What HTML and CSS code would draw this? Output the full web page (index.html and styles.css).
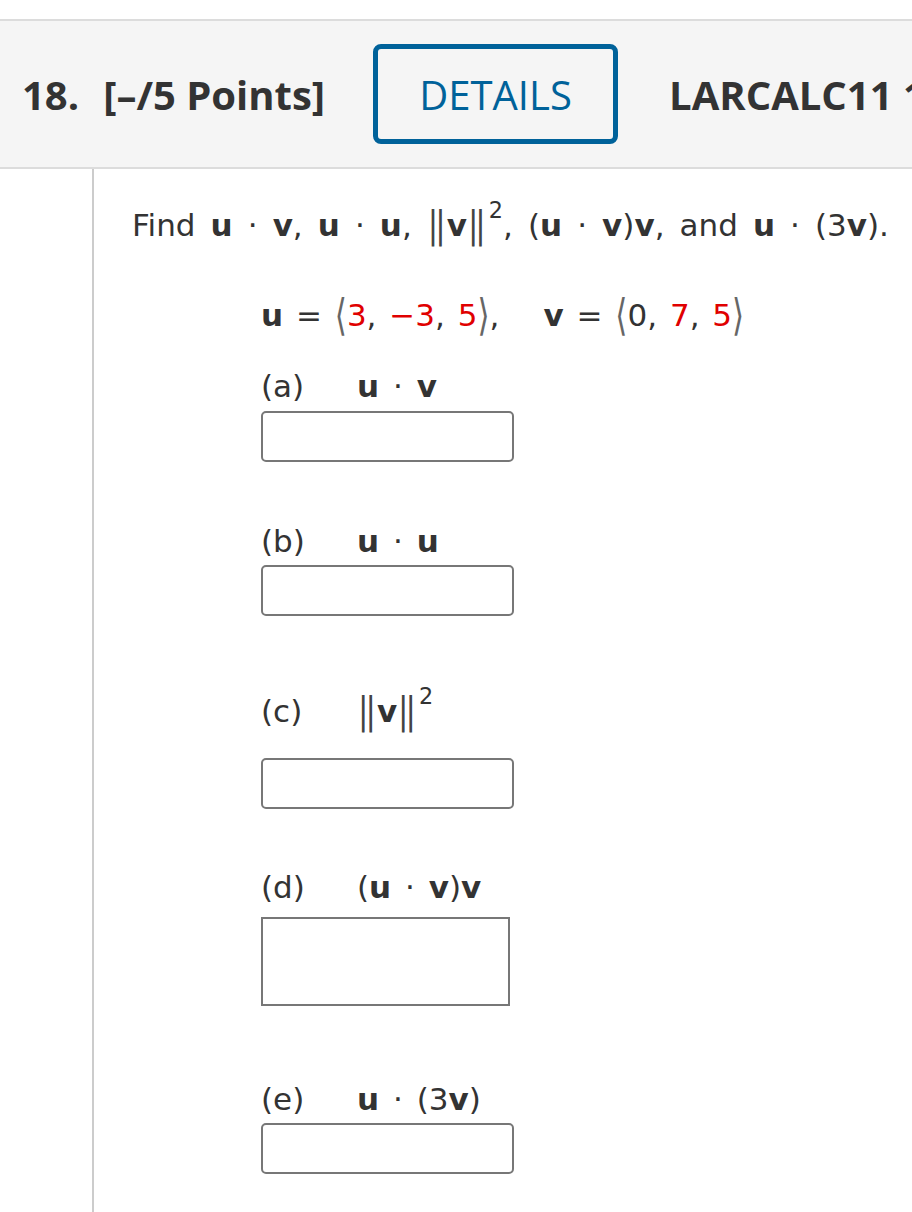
FILE: index.html
```html
<!DOCTYPE html>
<html>
<head>
<meta charset="utf-8">
<link rel="stylesheet" href="styles.css">
</head>
<body>
<div class="page">
  <div class="header">
    <span class="qnum">18.</span>
    <span class="points">[&ndash;/5 Points]</span>
    <span class="details">DETAILS</span>
    <span class="code">LARCALC11 12.3.008.</span>
  </div>
  <div class="body">
    <div class="gutter"></div>
    <div class="content">
      <p class="prompt">Find <b class="m">u</b> &middot; <b class="m">v</b>, <b class="m">u</b> &middot; <b class="m">u</b>, <span class="bar">||</span><b class="m">v</b><span class="bar">||</span><sup>2</sup>, (<b class="m">u</b> &middot; <b class="m">v</b>)<b class="m">v</b>, and <b class="m">u</b> &middot; (3<b class="m">v</b>).</p>
      <div class="indent">
        <p class="vecs"><b class="m">u</b> = <span class="ang">&#10216;</span><span class="red">3</span>, <span class="red">&minus;3</span>, <span class="red">5</span><span class="ang">&#10217;</span>,<span class="gap"></span><b class="m">v</b> = <span class="ang">&#10216;</span>0, <span class="red">7</span>, <span class="red">5</span><span class="ang">&#10217;</span></p>

        <div class="part pa">
          <div class="plabel"><span class="letter">(a)</span><span class="expr"><b class="m">u</b> &middot; <b class="m">v</b></span></div>
          <div class="box"></div>
        </div>
        <div class="part pb">
          <div class="plabel"><span class="letter">(b)</span><span class="expr"><b class="m">u</b> &middot; <b class="m">u</b></span></div>
          <div class="box"></div>
        </div>
        <div class="part pc">
          <div class="plabel"><span class="letter">(c)</span><span class="expr"><span class="bar">||</span><b class="m">v</b><span class="bar">||</span><sup>2</sup></span></div>
          <div class="box"></div>
        </div>
        <div class="part pd">
          <div class="plabel"><span class="letter">(d)</span><span class="expr">(<b class="m">u</b> &middot; <b class="m">v</b>)<b class="m">v</b></span></div>
          <div class="box tall"></div>
        </div>
        <div class="part pe">
          <div class="plabel"><span class="letter">(e)</span><span class="expr"><b class="m">u</b> &middot; (3<b class="m">v</b>)</span></div>
          <div class="box"></div>
        </div>
      </div>
    </div>
  </div>
</div>
</body>
</html>
```

FILE: styles.css
```css
html, body {
  margin: 0;
  padding: 0;
  background: #fff;
}
body {
  width: 912px;
  height: 1212px;
  overflow: hidden;
  font-family: "DejaVu Sans", "Open Sans", sans-serif;
  color: #333;
}
.page {
  padding-top: 19px;
}
.header {
  height: 146px;
  border-top: 2px solid #dcdcdc;
  border-bottom: 2px solid #dcdcdc;
  background: #f5f5f5;
  display: flex;
  align-items: center;
  white-space: nowrap;
  overflow: hidden;
  font-family: "Open Sans", sans-serif;
  font-size: 40px;
  font-weight: 700;
  color: #333;
  padding-left: 22px;
}
.header > span { flex: none; }
.qnum { margin-right: 24px; }
.points { margin-right: 48px; }
.details {
  box-sizing: border-box;
  width: 245px;
  height: 100px;
  border: 5px solid #00629a;
  border-radius: 8px;
  color: #00629a;
  font-weight: 400;
  display: flex;
  align-items: center;
  justify-content: center;
  margin-right: 51px;
}
.body {
  display: flex;
  height: 1100px;
}
.gutter {
  width: 92px;
  border-right: 2px solid #cccccc;
  flex: none;
}
.content {
  padding-left: 37px;
}
.prompt {
  margin: 0;
  padding-top: 36px;
  padding-left: 1px;
  font-size: 31px;
  line-height: 40px;
  white-space: nowrap;
  word-spacing: 5.2px;
}
.m {
  font-family: "DejaVu Sans", sans-serif;
  font-weight: 700;
}
sup {
  font-size: 0.72em;
  line-height: 0;
  vertical-align: 0.8em;
  margin-left: 2px;
}
.bar {
  display: inline-block;
  font-weight: 400;
  color: #444;
  letter-spacing: -3px;
  transform: scaleY(1.2);
  margin: 0 4px 0 1px;
}
.indent {
  padding-left: 130px;
}
.vecs {
  margin: 0;
  padding-top: 50px;
  font-size: 31px;
  line-height: 40px;
  white-space: nowrap;
  word-spacing: 3px;
}
.gap {
  display: inline-block;
  width: 44px;
}
.red { color: #e00000; }
.ang {
  display: inline-block;
  color: #666;
  transform: scaleY(1.4);
}
.plabel {
  font-size: 31px;
  line-height: 40px;
  display: flex;
  white-space: nowrap;
}
.letter {
  width: 96px;
  flex: none;
}
.expr { word-spacing: 4px; }
.box {
  box-sizing: border-box;
  width: 253px;
  height: 51px;
  border: 2px solid #777;
  border-radius: 5px;
  margin-top: 5px;
}
.pb .box, .pe .box { margin-top: 4px; }
.pc .box { margin-top: 27px; }
.box.tall {
  width: 249px;
  height: 89px;
  border-radius: 0;
  margin-top: 10px;
}
.pa { margin-top: 31px; }
.pb { margin-top: 59px; }
.pc { margin-top: 75px; }
.pd { margin-top: 58px; }
.pe { margin-top: 73px; }
```
